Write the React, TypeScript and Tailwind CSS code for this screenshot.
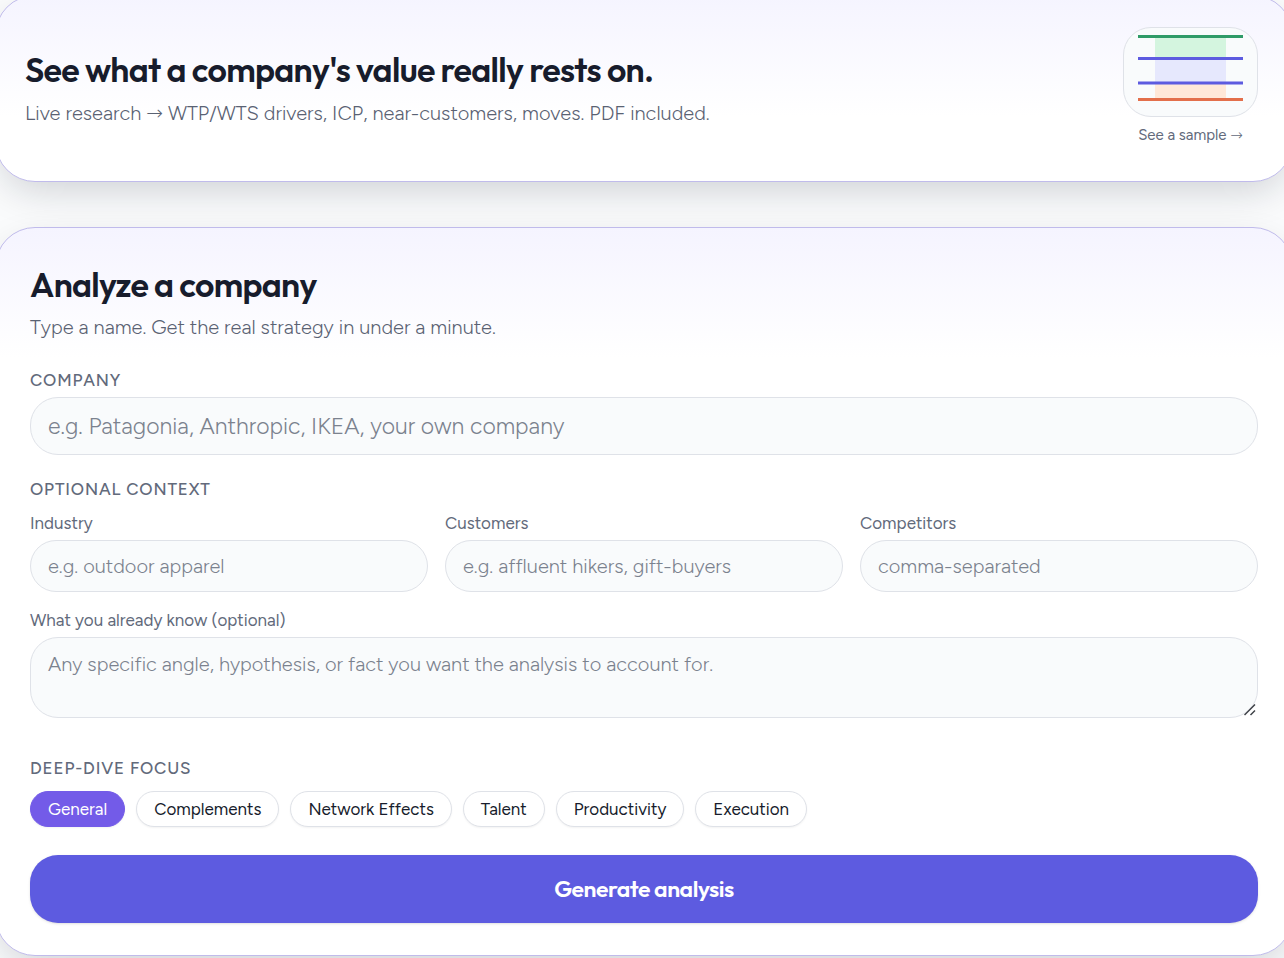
import { useState } from "react"
import { clsx } from "clsx"

const FOCUS_AREAS = [
    "General",
    "Complements",
    "Network Effects",
    "Talent",
    "Productivity",
    "Execution",
]

const CONTEXT_FIELDS = [
    { id: "industry", label: "Industry", placeholder: "e.g. outdoor apparel" },
    { id: "customers", label: "Customers", placeholder: "e.g. affluent hikers, gift-buyers" },
    { id: "competitors", label: "Competitors", placeholder: "comma-separated" },
]

const card =
    "rounded-[40px] border border-[#c0bbeb] bg-white bg-linear-to-b from-[#f5f4ff] shadow-[0_14px_40px_-8px_rgba(15,23,42,0.2)]"
const heading =
    "font-['Outfit','Figtree','Lato',sans-serif] text-[34px] leading-[48px] font-semibold tracking-[-0.02em] text-[#171c2c]"
const lead = "text-xl leading-7 font-light text-[#5a6273]"
const field =
    "block w-full border border-[#dfe2e8] bg-[#f9fbfc] px-[17px] font-light text-[#171c2c] placeholder:text-[#7b828e] focus:outline-2 focus:outline-[#5d5be0]"
const sectionLabel = "block text-[17px] leading-6 font-medium tracking-wider text-[#626a7b] uppercase"

function Arrow() {
    return <span className="font-['DejaVu_Sans',sans-serif] leading-none font-extralight">→</span>
}

/** Small value-stick chart used as the sample thumbnail */
function ValueStick() {
    return (
        <svg viewBox="0 0 105 68" className="h-[68px] w-[105px]" aria-hidden="true">
            <rect x="17" y="2" width="71" height="22" fill="#d4f5df" />
            <rect x="17" y="24" width="71" height="25" fill="#e6e8fd" />
            <rect x="17" y="49" width="71" height="16" fill="#ffe8d8" />
            <path d="M0 2.500H105" stroke="#2f9b67" strokeWidth="3" />
            <path d="M0 24.500H105" stroke="#5d5be0" strokeWidth="3" />
            <path d="M0 49H105" stroke="#5d5be0" strokeWidth="3" />
            <path d="M0 65.500H105" stroke="#e36f4b" strokeWidth="3" />
        </svg>
    )
}

function Hero() {
    return (
        <section
            className={clsx(card, "flex items-start justify-between to-white to-65% pt-[31px] pr-[34px] pb-9 pl-[29px]")}
        >
            <div className="pt-[19px]">
                <h1 className={heading}>See what a company's value really rests on.</h1>
                <p className={clsx(lead, "mt-[5px]")}>
                    Live research <Arrow /> WTP/WTS drivers, ICP, near-customers, moves. PDF included.
                </p>
            </div>
            <a href="#sample" className="flex flex-col items-center gap-2 text-[15px] leading-5 text-[#626a7b]">
                <span className="flex h-[90px] w-[135px] justify-center rounded-[28px] border border-[#dfe2e8] bg-[#f9fbfc] pt-[6px]">
                    <ValueStick />
                </span>
                <span>
                    See a sample <Arrow />
                </span>
            </a>
        </section>
    )
}

function AnalyzeForm() {
    const [focus, setFocus] = useState("General")

    return (
        <section className={clsx(card, "to-white to-[130px] px-[34px] pt-[33px] pb-8")}>
            <h2 className={heading}>Analyze a company</h2>
            <p className={clsx(lead, "mt-1")}>Type a name. Get the real strategy in under a minute.</p>

            <form onSubmit={(e) => e.preventDefault()}>
                <label htmlFor="company" className={clsx(sectionLabel, "mt-[27px]")}>
                    Company
                </label>
                <input
                    id="company"
                    placeholder="e.g. Patagonia, Anthropic, IKEA, your own company"
                    className={clsx(field, "mt-[5px] h-[58px] rounded-[28px] text-[23px]")}
                />

                <fieldset className="mt-[22px]">
                    <legend className={sectionLabel}>Optional context</legend>
                    <div className="mt-[10px] grid grid-cols-3 gap-[17px]">
                        {CONTEXT_FIELDS.map(({ id, label, placeholder }) => (
                            <div key={id}>
                                <label htmlFor={id} className="block text-[17px] leading-6 text-[#626a7b]">
                                    {label}
                                </label>
                                <input
                                    id={id}
                                    placeholder={placeholder}
                                    className={clsx(field, "mt-[5px] h-[52px] rounded-[28px] text-xl")}
                                />
                            </div>
                        ))}
                    </div>
                    <label htmlFor="notes" className="mt-4 block text-[17px] leading-6 text-[#626a7b]">
                        What you already know (optional)
                    </label>
                    <div className="relative mt-[5px]">
                        <textarea
                            id="notes"
                            placeholder="Any specific angle, hypothesis, or fact you want the analysis to account for."
                            className={clsx(
                                field,
                                "h-[81px] resize-y rounded-[28px] py-3 text-xl leading-7 [&::-webkit-resizer]:bg-transparent"
                            )}
                        />
                        {/* Resize grip */}
                        <svg
                            viewBox="0 0 12 12"
                            className="pointer-events-none absolute right-0.5 bottom-0.5 size-3"
                            stroke="#3f4248"
                            strokeWidth="1.5"
                            aria-hidden="true"
                        >
                            <path d="M0.500 11L11 0.500M6.500 11L11 6.500" />
                        </svg>
                    </div>
                </fieldset>

                <fieldset className="mt-[38px]">
                    <legend className={sectionLabel}>Deep-dive focus</legend>
                    <div className="mt-[11px] flex flex-wrap gap-[11px]">
                        {FOCUS_AREAS.map((area) => (
                            <button
                                key={area}
                                type="button"
                                aria-pressed={focus === area}
                                onClick={() => setFocus(area)}
                                className={clsx(
                                    "h-9 rounded-full border px-[17px] pt-0.5 text-[17px] shadow-xs",
                                    focus === area
                                        ? "border-[#735be8] bg-[#735be8] text-white"
                                        : "border-[#dfe2e8] bg-white text-[#171c2c]"
                                )}
                            >
                                {area}
                            </button>
                        ))}
                    </div>
                </fieldset>

                <button
                    type="submit"
                    className="mt-7 h-[68px] w-full rounded-[28px] bg-[#5d5be0] font-['Outfit','Figtree','Lato',sans-serif] text-[23px] font-semibold tracking-[-0.02em] text-white shadow-sm"
                >
                    Generate analysis
                </button>
            </form>
        </section>
    )
}

export default function App() {
    return (
        <div className="min-h-screen overflow-hidden bg-[#fafbfc] font-['Figtree','Lato',sans-serif]">
            <main className="-mt-[5px] -mr-[9px] mb-0 -ml-[5px] flex flex-col gap-[45px]">
                <Hero />
                <AnalyzeForm />
            </main>
        </div>
    )
}
